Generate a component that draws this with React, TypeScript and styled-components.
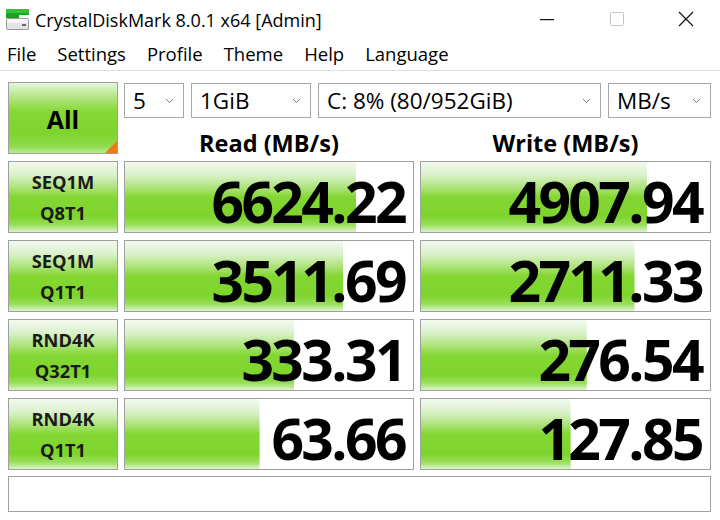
import React from 'react'
import styled, { createGlobalStyle } from 'styled-components'

const GlobalStyle = createGlobalStyle`
  html, body {
    margin: 0;
    padding: 0;
    background: #ffffff;
  }
  body {
    font-family: 'Open Sans', 'Noto Sans', 'Liberation Sans', sans-serif;
    color: #000;
  }
`

const green = `linear-gradient(
  to bottom,
  #f3f9ef 0%,
  #dbf1cc 18%,
  #a9e273 38%,
  #84d733 50%,
  #7ed42c 78%,
  #98df5a 90%,
  #dcf3cc 100%
)`

const Window = styled.div`
  width: 720px;
  height: 520px;
  background: #ffffff;
  display: flex;
  flex-direction: column;
  overflow: hidden;
`

const TitleBar = styled.div`
  height: 38px;
  display: flex;
  align-items: center;
  padding-left: 5px;
`

const Title = styled.span`
  font-size: 18px;
  margin-left: 5px;
  margin-top: 1px;
`

const Controls = styled.div`
  margin-left: auto;
  display: flex;
  height: 100%;
`

const ControlButton = styled.div`
  width: 69px;
  height: 100%;
  display: flex;
  align-items: center;
  justify-content: center;
`

const MenuBar = styled.div`
  height: 32px;
  display: flex;
  align-items: center;
  gap: 21px;
  padding-left: 7px;
  border-bottom: 1px solid #dedede;
  font-size: 18.5px;
`

const MenuItem = styled.span`
  line-height: 22px;
`

const Content = styled.div`
  padding: 11px 9px 0 8px;
  display: flex;
  flex-direction: column;
`

const TopGrid = styled.div`
  display: grid;
  grid-template-columns: 110px 290px 291px;
  grid-template-rows: 36px 36px;
  column-gap: 6px;
`

const AllButton = styled.div`
  grid-row: 1 / 3;
  box-sizing: border-box;
  border: 1px solid #a0a0a0;
  background: linear-gradient(
    to bottom,
    #e6f5dc 0%,
    #b3e585 20%,
    #86d838 40%,
    #7ed42c 70%,
    #8edb4a 90%,
    #b9eb92 100%
  );
  display: flex;
  align-items: center;
  justify-content: center;
  padding-top: 2px;
  font-weight: 700;
  font-size: 25px;
  position: relative;
  overflow: hidden;

  &::after {
    content: '';
    position: absolute;
    right: 0;
    bottom: 0;
    border-style: solid;
    border-width: 0 0 12px 12px;
    border-color: transparent transparent #f07a1a transparent;
  }
`

const Combos = styled.div`
  grid-column: 2 / 4;
  display: flex;
  gap: 7px;
  padding-top: 1px;
  height: 35px;
`

const Combo = styled.div<{ $w?: number }>`
  box-sizing: border-box;
  height: 35px;
  ${(p) => (p.$w ? `width: ${p.$w}px;` : 'flex: 1;')}
  border: 1px solid #a8a8a8;
  display: flex;
  align-items: center;
  padding: 0 9px 0 8px;
  font-size: 22.5px;
  background: #fff;
`

const ComboText = styled.span`
  flex: 1;
  white-space: nowrap;
  line-height: 26px;
`

const Header = styled.div`
  display: flex;
  justify-content: center;
  align-items: flex-end;
  font-weight: 700;
  font-size: 23.5px;
  line-height: 20px;
  padding-bottom: 1px;
`

const Results = styled.div`
  display: grid;
  grid-template-columns: 110px 290px 291px;
  grid-auto-rows: 72px;
  column-gap: 6px;
  row-gap: 7px;
  margin-top: 7px;
`

const Label = styled.div`
  box-sizing: border-box;
  border: 1px solid #a0a0a0;
  background: ${green};
  display: flex;
  flex-direction: column;
  align-items: center;
  justify-content: center;
  font-weight: 700;
  font-size: 18.3px;
  line-height: 31px;
  color: #1a1a1a;
`

const Meter = styled.div`
  box-sizing: border-box;
  border: 1px solid #a0a0a0;
  background-color: #ffffff;
  background-image: ${green};
  background-repeat: no-repeat;
  display: flex;
  justify-content: flex-end;
  align-items: flex-end;
  padding: 0 8px 2px 0;
  font-weight: 700;
  font-size: 57px;
  letter-spacing: -2.6px;
  line-height: 57px;
  color: #000;
`

const StatusBar = styled.div`
  margin-top: 6px;
  height: 36px;
  box-sizing: border-box;
  border: 1px solid #a0a0a0;
  background: #fff;
`

const Chevron = () => (
  <svg width="9" height="6" viewBox="0 0 9 6">
    <path d="M1 1 L4.5 4.5 L8 1" fill="none" stroke="#7a7a7a" strokeWidth="1" />
  </svg>
)

const AppIcon = () => (
  <svg width="25" height="24" viewBox="0 0 25 24">
    <rect x="1" y="2" width="23" height="4" fill="#35c13a" />
    <rect x="1" y="6" width="23" height="2" fill="#20a226" />
    <rect x="1" y="8" width="13" height="3" fill="#1f9a24" />
    <rect x="1" y="11" width="23" height="12" rx="2" fill="#9a9a9a" />
    <rect x="2" y="12" width="21" height="10" rx="1.5" fill="#e4e4e4" />
    <rect x="2" y="12" width="21" height="4" fill="#f6f6f6" />
    <rect x="17" y="17" width="4" height="2" fill="#6a6a6a" />
  </svg>
)

const rows = [
  { a: 'SEQ1M', b: 'Q8T1', read: 6624.22, write: 4907.94 },
  { a: 'SEQ1M', b: 'Q1T1', read: 3511.69, write: 2711.33 },
  { a: 'RND4K', b: 'Q32T1', read: 333.31, write: 276.54 },
  { a: 'RND4K', b: 'Q1T1', read: 63.66, write: 127.85 },
]

// CrystalDiskMark style log meter
const meterPct = (v: number) => {
  const r = Math.log10(v * 10) / 6
  return Math.max(0, Math.min(1, r)) * 100
}

const MeterCell: React.FC<{ value: number }> = ({ value }) => (
  <Meter style={{ backgroundSize: `${meterPct(value)}% 100%` }}>
    {value.toFixed(2)}
  </Meter>
)

const App: React.FC = () => {
  return (
    <>
      <GlobalStyle />
      <Window>
        <TitleBar>
          <AppIcon />
          <Title>CrystalDiskMark 8.0.1 x64 [Admin]</Title>
          <Controls>
            <ControlButton>
              <svg width="16" height="16" viewBox="0 0 16 16">
                <rect x="0" y="8" width="14" height="1.2" fill="#111" />
              </svg>
            </ControlButton>
            <ControlButton>
              <svg width="16" height="16" viewBox="0 0 16 16">
                <rect x="1.5" y="1.5" width="13" height="13" rx="1" fill="none" stroke="#c4c4c4" strokeWidth="1" />
              </svg>
            </ControlButton>
            <ControlButton>
              <svg width="16" height="16" viewBox="0 0 16 16">
                <path d="M1 1 L15 15 M15 1 L1 15" stroke="#111" strokeWidth="1.2" />
              </svg>
            </ControlButton>
          </Controls>
        </TitleBar>

        <MenuBar>
          <MenuItem>File</MenuItem>
          <MenuItem>Settings</MenuItem>
          <MenuItem>Profile</MenuItem>
          <MenuItem>Theme</MenuItem>
          <MenuItem>Help</MenuItem>
          <MenuItem>Language</MenuItem>
        </MenuBar>

        <Content>
          <TopGrid>
            <AllButton>All</AllButton>
            <Combos>
              <Combo $w={60}>
                <ComboText>5</ComboText>
                <Chevron />
              </Combo>
              <Combo $w={120}>
                <ComboText>1GiB</ComboText>
                <Chevron />
              </Combo>
              <Combo $w={283}>
                <ComboText>C: 8% (80/952GiB)</ComboText>
                <Chevron />
              </Combo>
              <Combo>
                <ComboText>MB/s</ComboText>
                <Chevron />
              </Combo>
            </Combos>
            <Header>Read (MB/s)</Header>
            <Header>Write (MB/s)</Header>
          </TopGrid>

          <Results>
            {rows.map((r, i) => (
              <React.Fragment key={i}>
                <Label>
                  <span>{r.a}</span>
                  <span>{r.b}</span>
                </Label>
                <MeterCell value={r.read} />
                <MeterCell value={r.write} />
              </React.Fragment>
            ))}
          </Results>

          <StatusBar />
        </Content>
      </Window>
    </>
  )
}

export default App
